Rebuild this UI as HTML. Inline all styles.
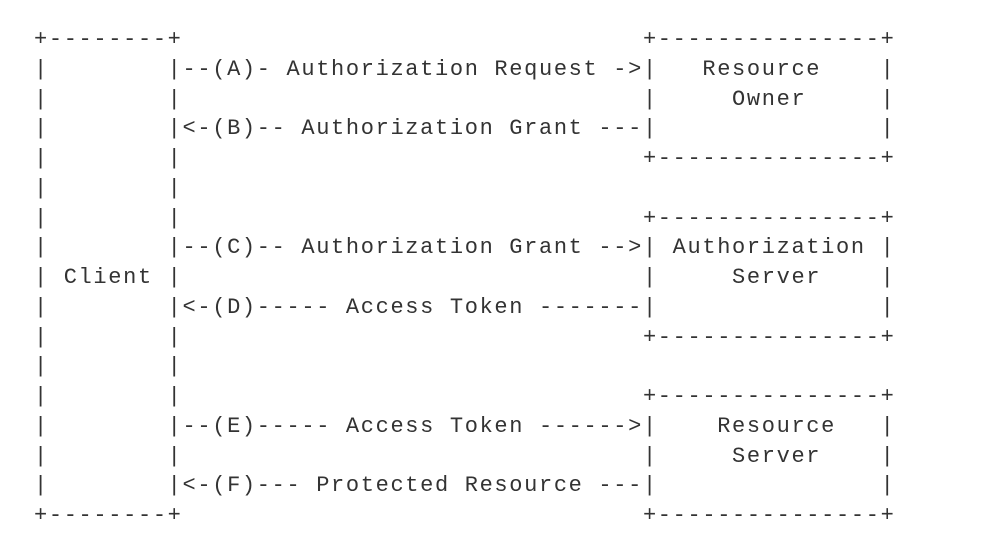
<!DOCTYPE html>
<html><head><meta charset="utf-8"><style>
html,body{margin:0;padding:0;background:#fff;width:1006px;height:546px;overflow:hidden}
pre{position:absolute;left:34px;top:25px;margin:0;font-family:"Liberation Mono",monospace;font-size:22px;letter-spacing:1.65px;line-height:29.75px;color:#333}
</style></head><body>
<pre>+--------+                               +---------------+
|        |--(A)- Authorization Request -&gt;|   Resource    |
|        |                               |     Owner     |
|        |&lt;-(B)-- Authorization Grant ---|               |
|        |                               +---------------+
|        |
|        |                               +---------------+
|        |--(C)-- Authorization Grant --&gt;| Authorization |
| Client |                               |     Server    |
|        |&lt;-(D)----- Access Token -------|               |
|        |                               +---------------+
|        |
|        |                               +---------------+
|        |--(E)----- Access Token ------&gt;|    Resource   |
|        |                               |     Server    |
|        |&lt;-(F)--- Protected Resource ---|               |
+--------+                               +---------------+</pre>
</body></html>
